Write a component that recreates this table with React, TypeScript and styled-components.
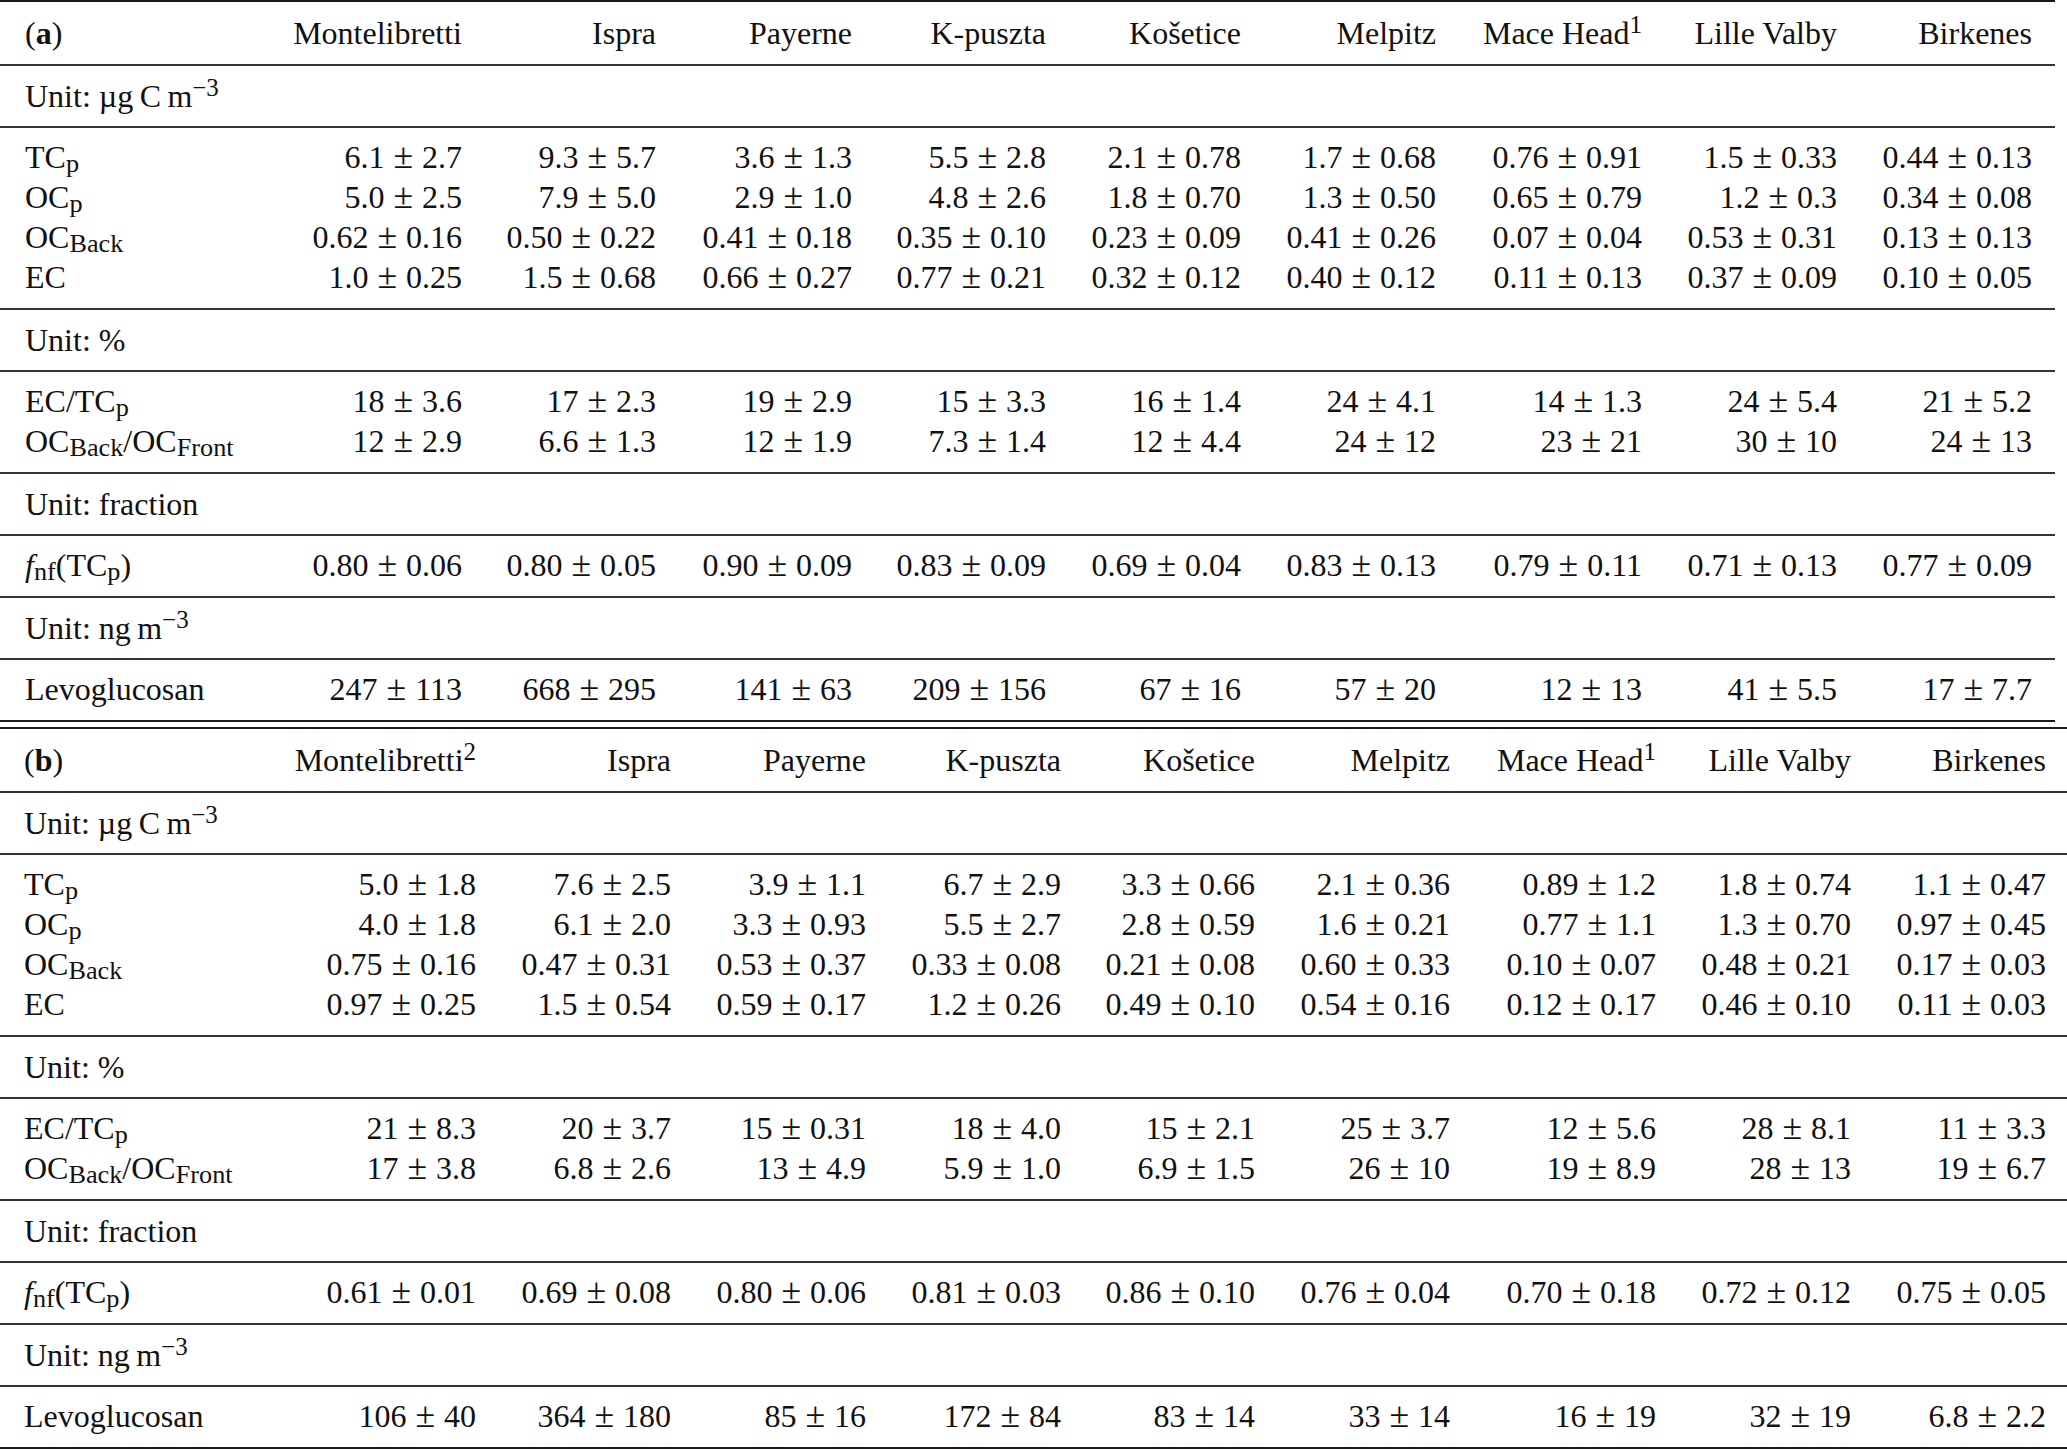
import React from 'react';
import styled, { createGlobalStyle } from 'styled-components';

const GlobalStyle = createGlobalStyle`
  html, body { margin: 0; padding: 0; background: #fff; overflow: hidden; }
  body { font-family: "Liberation Serif", "Times New Roman", serif; color: #111; }
`;

const Page = styled.main`
  width: 2067px;
  height: 1450px;
  overflow: hidden;
`;

const TableBox = styled.section<{ $width: number; $gap: number }>`
  width: ${(p) => p.$width}px;
  border-top: 2px solid #1b1b1b;
  border-bottom: 2px solid #1b1b1b;
  margin-bottom: ${(p) => p.$gap}px;
  font-size: 32px;
`;

type Kind = 'head' | 'unit' | 'group';

const Section = styled.div<{ $kind: Kind }>`
  padding: ${(p) => (p.$kind === 'head' ? '11px 0' : p.$kind === 'unit' ? '10px 0' : '9px 0 11px')};
  & + & {
    border-top: 2px solid #333;
  }
`;

const Row = styled.div<{ $cols: string; $left: number }>`
  display: grid;
  grid-template-columns: ${(p) => p.$cols};
  padding: 0 23px 0 ${(p) => p.$left}px;
  height: 40px;
  line-height: 40px;
  white-space: nowrap;
`;

const Label = styled.div`
  text-align: left;
`;

const Cell = styled.div`
  text-align: right;
`;

const UnitLabel = styled.div`
  grid-column: 1 / -1;
`;

const Pm = styled.span`
  font-size: 1.12em;
  line-height: 0;
  margin: 0 0.25em;
`;

const Sub = styled.sub`
  font-size: 0.82em;
  line-height: 0;
  vertical-align: -0.16em;
`;

const Sup = styled.sup`
  font-size: 0.78em;
  line-height: 0;
  vertical-align: 0.45em;
`;

const Bold = styled.b`
  font-weight: 700;
`;

const Ital = styled.i`
  font-style: italic;
`;

const Value: React.FC<{ v: string }> = ({ v }) => {
  const [a, b] = v.split('±');
  return (
    <>
      {a}
      <Pm>±</Pm>
      {b}
    </>
  );
};

const LABELS: Record<string, React.ReactNode> = {
  TCp: (
    <>
      TC<Sub>p</Sub>
    </>
  ),
  OCp: (
    <>
      OC<Sub>p</Sub>
    </>
  ),
  OCBack: (
    <>
      OC<Sub>Back</Sub>
    </>
  ),
  EC: <>EC</>,
  ECTC: (
    <>
      EC/TC<Sub>p</Sub>
    </>
  ),
  OCratio: (
    <>
      OC<Sub>Back</Sub>/OC<Sub>Front</Sub>
    </>
  ),
  fnf: (
    <>
      <Ital>f</Ital>
      <Sub>nf</Sub>(TC<Sub>p</Sub>)
    </>
  ),
  Levo: <>Levoglucosan</>,
};

const UNITS: Record<string, React.ReactNode> = {
  ug: (
    <>
      Unit: µg{'\u2009'}C{'\u2009'}m<Sup>−3</Sup>
    </>
  ),
  pct: <>Unit: %</>,
  frac: <>Unit: fraction</>,
  ng: (
    <>
      Unit: ng{'\u2009'}m<Sup>−3</Sup>
    </>
  ),
};

type DataRow = [string, string[]];
type Block = { unit: string; rows: DataRow[] };

type TableSpec = {
  tag: string;
  left: number;
  width: number;
  gap: number;
  cols: string;
  firstSup?: string;
  blocks: Block[];
};

const SITES = ['Montelibretti', 'Ispra', 'Payerne', 'K-puszta', 'Košetice', 'Melpitz', 'Mace Head', 'Lille Valby', 'Birkenes'];

const TABLES: TableSpec[] = [
  {
    tag: 'a',
    left: 25,
    width: 2055,
    gap: 5,
    cols: '242px 195px 194px 196px 194px 195px 195px 206px 195px 195px',
    blocks: [
      {
        unit: 'ug',
        rows: [
          ['TCp', ['6.1±2.7', '9.3±5.7', '3.6±1.3', '5.5±2.8', '2.1±0.78', '1.7±0.68', '0.76±0.91', '1.5±0.33', '0.44±0.13']],
          ['OCp', ['5.0±2.5', '7.9±5.0', '2.9±1.0', '4.8±2.6', '1.8±0.70', '1.3±0.50', '0.65±0.79', '1.2±0.3', '0.34±0.08']],
          ['OCBack', ['0.62±0.16', '0.50±0.22', '0.41±0.18', '0.35±0.10', '0.23±0.09', '0.41±0.26', '0.07±0.04', '0.53±0.31', '0.13±0.13']],
          ['EC', ['1.0±0.25', '1.5±0.68', '0.66±0.27', '0.77±0.21', '0.32±0.12', '0.40±0.12', '0.11±0.13', '0.37±0.09', '0.10±0.05']],
        ],
      },
      {
        unit: 'pct',
        rows: [
          ['ECTC', ['18±3.6', '17±2.3', '19±2.9', '15±3.3', '16±1.4', '24±4.1', '14±1.3', '24±5.4', '21±5.2']],
          ['OCratio', ['12±2.9', '6.6±1.3', '12±1.9', '7.3±1.4', '12±4.4', '24±12', '23±21', '30±10', '24±13']],
        ],
      },
      {
        unit: 'frac',
        rows: [['fnf', ['0.80±0.06', '0.80±0.05', '0.90±0.09', '0.83±0.09', '0.69±0.04', '0.83±0.13', '0.79±0.11', '0.71±0.13', '0.77±0.09']]],
      },
      {
        unit: 'ng',
        rows: [['Levo', ['247±113', '668±295', '141±63', '209±156', '67±16', '57±20', '12±13', '41±5.5', '17±7.7']]],
      },
    ],
  },
  {
    tag: 'b',
    left: 24,
    width: 2069,
    gap: 0,
    cols: '257px 195px 195px 195px 195px 194px 195px 206px 195px 195px',
    firstSup: '2',
    blocks: [
      {
        unit: 'ug',
        rows: [
          ['TCp', ['5.0±1.8', '7.6±2.5', '3.9±1.1', '6.7±2.9', '3.3±0.66', '2.1±0.36', '0.89±1.2', '1.8±0.74', '1.1±0.47']],
          ['OCp', ['4.0±1.8', '6.1±2.0', '3.3±0.93', '5.5±2.7', '2.8±0.59', '1.6±0.21', '0.77±1.1', '1.3±0.70', '0.97±0.45']],
          ['OCBack', ['0.75±0.16', '0.47±0.31', '0.53±0.37', '0.33±0.08', '0.21±0.08', '0.60±0.33', '0.10±0.07', '0.48±0.21', '0.17±0.03']],
          ['EC', ['0.97±0.25', '1.5±0.54', '0.59±0.17', '1.2±0.26', '0.49±0.10', '0.54±0.16', '0.12±0.17', '0.46±0.10', '0.11±0.03']],
        ],
      },
      {
        unit: 'pct',
        rows: [
          ['ECTC', ['21±8.3', '20±3.7', '15±0.31', '18±4.0', '15±2.1', '25±3.7', '12±5.6', '28±8.1', '11±3.3']],
          ['OCratio', ['17±3.8', '6.8±2.6', '13±4.9', '5.9±1.0', '6.9±1.5', '26±10', '19±8.9', '28±13', '19±6.7']],
        ],
      },
      {
        unit: 'frac',
        rows: [['fnf', ['0.61±0.01', '0.69±0.08', '0.80±0.06', '0.81±0.03', '0.86±0.10', '0.76±0.04', '0.70±0.18', '0.72±0.12', '0.75±0.05']]],
      },
      {
        unit: 'ng',
        rows: [['Levo', ['106±40', '364±180', '85±16', '172±84', '83±14', '33±14', '16±19', '32±19', '6.8±2.2']]],
      },
    ],
  },
];

const DataTable: React.FC<{ spec: TableSpec }> = ({ spec }) => {
  const rowProps = { $cols: spec.cols, $left: spec.left };
  return (
    <TableBox $width={spec.width} $gap={spec.gap}>
      <Section $kind="head">
        <Row {...rowProps}>
          <Label>
            (<Bold>{spec.tag}</Bold>)
          </Label>
          {SITES.map((s, i) => (
            <Cell key={s}>
              {s}
              {i === 0 && spec.firstSup ? <Sup>{spec.firstSup}</Sup> : null}
              {s === 'Mace Head' ? <Sup>1</Sup> : null}
            </Cell>
          ))}
        </Row>
      </Section>
      {spec.blocks.map((b) => (
        <React.Fragment key={b.unit}>
          <Section $kind="unit">
            <Row {...rowProps}>
              <UnitLabel>{UNITS[b.unit]}</UnitLabel>
            </Row>
          </Section>
          <Section $kind="group">
            {b.rows.map(([label, vals]) => (
              <Row key={label} {...rowProps}>
                <Label>{LABELS[label]}</Label>
                {vals.map((v, i) => (
                  <Cell key={i}>
                    <Value v={v} />
                  </Cell>
                ))}
              </Row>
            ))}
          </Section>
        </React.Fragment>
      ))}
    </TableBox>
  );
};

export default function App() {
  return (
    <Page>
      <GlobalStyle />
      {TABLES.map((t) => (
        <DataTable key={t.tag} spec={t} />
      ))}
    </Page>
  );
}
